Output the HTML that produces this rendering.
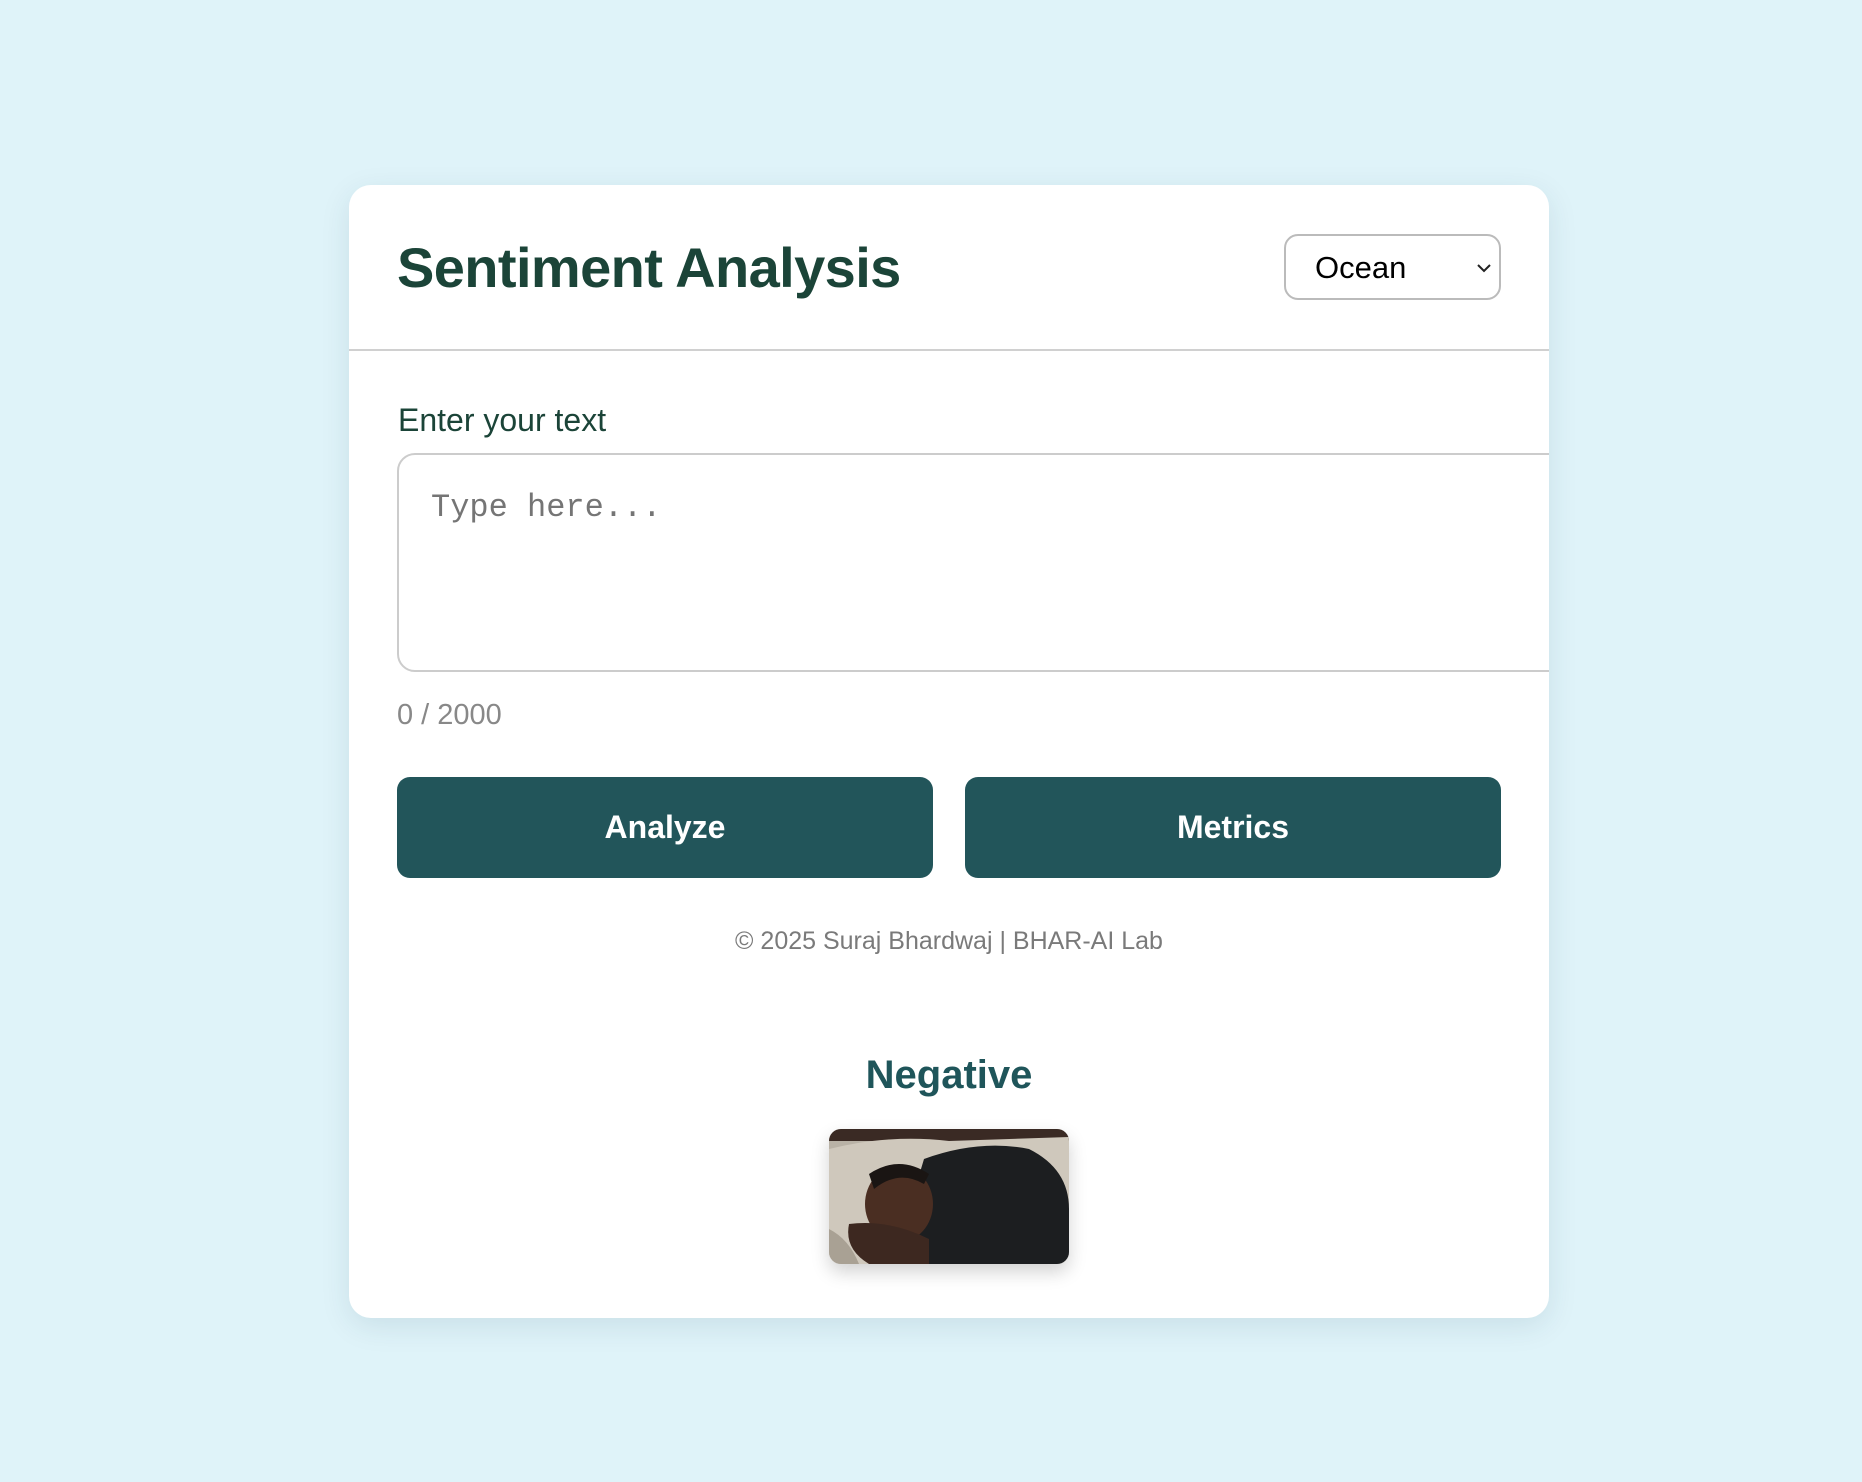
<!DOCTYPE html>
<html><head><meta charset="utf-8"><style>
html,body{margin:0;padding:0}
body{width:1862px;height:1482px;background:#dff3f9;position:relative;font-family:"Liberation Sans",sans-serif;overflow:hidden}
.card{position:absolute;left:349px;top:185px;width:1200px;height:1133px;background:#fff;border-radius:22px;box-shadow:0 8px 30px rgba(0,60,80,0.10);overflow:hidden}
.t{position:absolute;white-space:nowrap}
.title{left:48px;top:47px;font-size:56px;font-weight:bold;color:#1b4438;letter-spacing:-0.6px;line-height:72px}
.sel{position:absolute;left:935px;top:49px;width:217px;height:66px;border:2px solid #bbb;border-radius:14px;box-sizing:border-box}
.sel span{position:absolute;left:29px;top:14px;font-size:31px;color:#000}
.hr{position:absolute;left:0;top:164px;width:1200px;height:2px;background:#d0d0d0}
.label{left:49px;top:217px;font-size:32px;color:#1b4438}
.ta{position:absolute;left:48px;top:268px;width:1300px;height:219px;border:2px solid #ccc;border-radius:18px;box-sizing:border-box}
.ph{left:82px;top:304px;font-family:"Liberation Mono",monospace;font-size:32px;color:#757575}
.cnt{left:48px;top:514px;font-size:29px;color:#888}
.btn{position:absolute;top:592px;width:536px;height:101px;background:#22555a;border-radius:13px;color:#fff;font-weight:bold;font-size:32px;text-align:center;line-height:101px}
.foot{left:0;width:1200px;text-align:center;top:742px;font-size:25px;color:#7a7a7a}
.neg{left:0;width:1200px;text-align:center;top:868px;font-size:40px;font-weight:bold;color:#1f555a}
.img{position:absolute;left:480px;top:944px;width:240px;height:135px;border-radius:12px;overflow:hidden;box-shadow:0 8px 18px rgba(0,0,0,0.18)}
</style></head><body>
<div class="card">
  <div class="t title">Sentiment Analysis</div>
  <div class="sel"><span>Ocean</span>
    <svg style="position:absolute;left:190px;top:26px" width="16" height="12" viewBox="0 0 16 12"><path d="M2 3 L8 9 L14 3" fill="none" stroke="#222" stroke-width="2"/></svg>
  </div>
  <div class="hr"></div>
  <div class="t label">Enter your text</div>
  <div class="ta"></div>
  <div class="t ph">Type here...</div>
  <div class="t cnt">0 / 2000</div>
  <div class="btn" style="left:48px">Analyze</div>
  <div class="btn" style="left:616px">Metrics</div>
  <div class="t foot">© 2025 Suraj Bhardwaj | BHAR-AI Lab</div>
  <div class="t neg">Negative</div>
  <div class="img">
    <svg width="240" height="135" viewBox="0 0 240 135">
      <rect width="240" height="135" fill="#b9b2a6"/>
      <rect width="240" height="12" fill="#3a2a24"/>
      <path d="M0 20 Q60 5 120 12 L240 8 L240 135 L0 135Z" fill="#cfc8bc"/>
      <path d="M95 30 Q150 10 200 20 Q240 40 240 80 L240 135 L90 135 Q60 110 80 80Z" fill="#1c1e20"/>
      <ellipse cx="70" cy="75" rx="34" ry="38" fill="#4a2e22"/>
      <path d="M40 45 Q70 25 100 45 L95 55 Q70 40 45 60Z" fill="#1a1513"/>
      <path d="M20 95 Q60 90 100 110 L100 135 L40 135 Q15 120 20 95Z" fill="#3d2820"/>
      <path d="M0 100 Q20 110 30 135 L0 135Z" fill="#a9a194"/>
    </svg>
  </div>
</div>
</body></html>
